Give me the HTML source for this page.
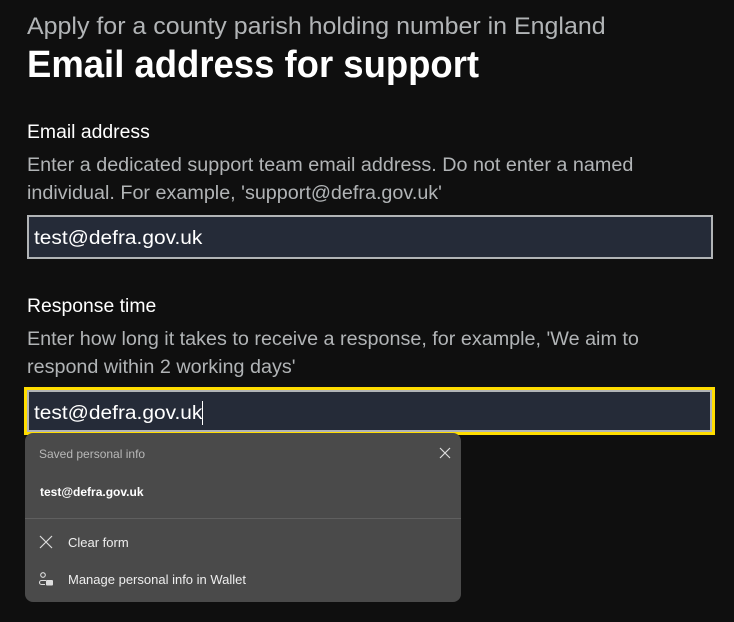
<!DOCTYPE html>
<html><head><meta charset="utf-8"><style>
body{margin:0;width:734px;height:622px;background:#0f0f0f;font-family:"Liberation Sans",sans-serif;overflow:hidden;position:relative;color:#fff}
.a{position:absolute;white-space:nowrap;transform-origin:0 0}
.inp{position:absolute;background:#252b38;box-sizing:border-box}
.pop{position:absolute;left:25px;top:433px;width:436px;height:169px;background:#4a4a4a;border-radius:8px}
</style></head><body>
<div class="a" style="left:27px;top:13px;font-size:24px;color:#b1b4b6;transform:scaleX(1.04)">Apply for a county parish holding number in England</div>
<div class="a" style="left:27px;top:44px;font-size:38px;font-weight:bold;color:#fff;transform:scaleX(0.96)">Email address for support</div>
<div class="a" style="left:27px;top:122px;font-size:19px;color:#fff;transform:scaleX(1.02)">Email address</div>
<div class="a" style="left:27px;top:152px;font-size:19px;color:#b1b4b6;transform:scaleX(1.04);line-height:28px">Enter a dedicated support team email address. Do not enter a named<br>individual. For example, 'support@defra.gov.uk'</div>
<div class="inp" style="left:27px;top:215px;width:686px;height:44px;border:2px solid #b1b4b6"></div>
<div class="a" style="left:34px;top:228px;font-size:19px;color:#fff;transform:scaleX(1.1)">test@defra.gov.uk</div>
<div class="a" style="left:27px;top:296px;font-size:19px;color:#fff;transform:scaleX(1.02)">Response time</div>
<div class="a" style="left:27px;top:326px;font-size:19px;color:#b1b4b6;transform:scaleX(1.04);line-height:28px">Enter how long it takes to receive a response, for example, 'We aim to<br>respond within 2 working days'</div>
<div style="position:absolute;left:24px;top:387px;width:691px;height:48px;background:#ffdd00"></div>
<div class="inp" style="left:27px;top:390px;width:685px;height:42px;border:2px solid #b1b4b6;background:#252b38"></div>
<div class="a" style="left:34px;top:403px;font-size:19px;color:#fff;transform:scaleX(1.1)">test@defra.gov.uk</div>
<div style="position:absolute;left:202px;top:401px;width:1px;height:24px;background:#fff"></div>
<div class="pop">
<div class="a" style="left:14px;top:14px;font-size:12px;color:#b8b8b8">Saved personal info</div>
<svg style="position:absolute;left:414px;top:14px" width="12" height="12" viewBox="0 0 12 12"><path d="M1 1L11 11M11 1L1 11" stroke="#ddd" stroke-width="1.2"/></svg>
<div class="a" style="left:15px;top:52px;font-size:12px;font-weight:bold;color:#fff">test@defra.gov.uk</div>
<div style="position:absolute;left:0;top:85px;width:436px;height:1px;background:#5f5f5f"></div>
<svg style="position:absolute;left:14px;top:102px" width="14" height="14" viewBox="0 0 14 14"><path d="M1 1L13 13M13 1L1 13" stroke="#ddd" stroke-width="1.2"/></svg>
<div class="a" style="left:43px;top:102px;font-size:13px;color:#eee">Clear form</div>
<svg style="position:absolute;left:13px;top:138px" width="16" height="16" viewBox="0 0 16 16"><circle cx="5" cy="4" r="2.3" fill="none" stroke="#ddd" stroke-width="1.1"/><path d="M8 9.5H3.5a2 2 0 0 0 0 4H7" fill="none" stroke="#ddd" stroke-width="1.1"/><rect x="8" y="9" width="7" height="5.5" rx="1" fill="#ddd"/></svg>
<div class="a" style="left:43px;top:139px;font-size:13px;color:#eee">Manage personal info in Wallet</div>
</div>
</body></html>
